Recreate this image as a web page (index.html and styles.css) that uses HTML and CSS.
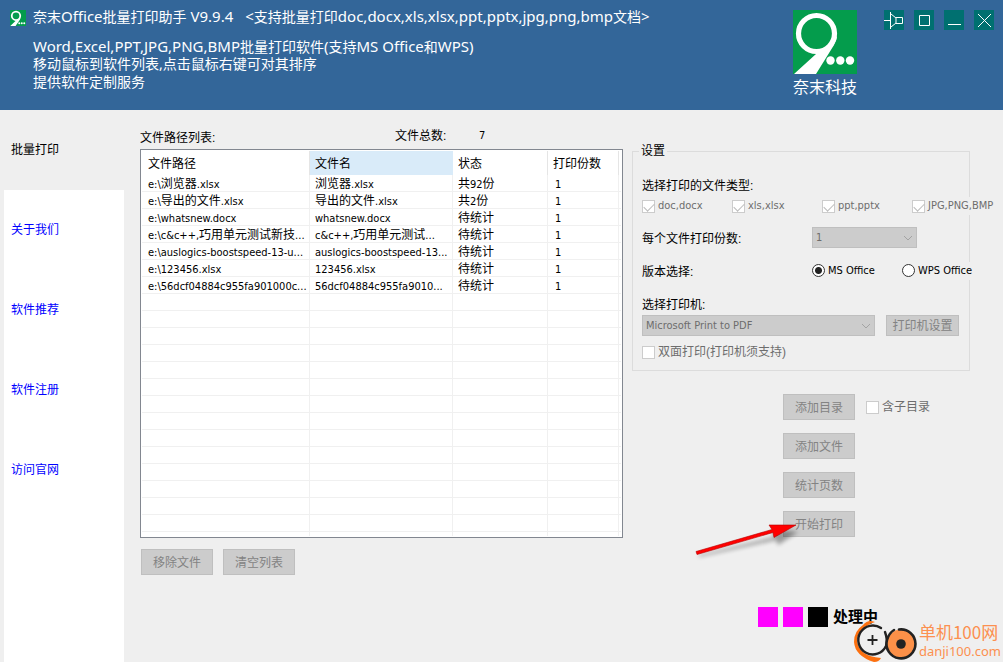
FILE: index.html
```html
<!DOCTYPE html>
<html lang="zh-CN">
<head>
<meta charset="utf-8">
<title>奈末Office批量打印助手</title>
<link rel="stylesheet" href="styles.css">
</head>
<body>
<header class="header">
  <svg class="app-icon" viewBox="0 0 64 64" aria-hidden="true">
    <rect width="64" height="64" fill="#049c4c"/>
    <path d="M1 64 22 44Q18 43 24 42Q36 41 42 31L40 38 36 44L22 64Z" fill="#fff"/>
    <circle cx="24" cy="23" r="17" fill="#049c4c" stroke="#fff" stroke-width="7"/>
    <g fill="#fff"><circle cx="37" cy="53" r="4"/><circle cx="47" cy="53" r="4"/><circle cx="57" cy="53" r="4"/></g>
  </svg>
  <div class="headings">
    <h1 class="title"><span><span class="zh">奈末</span>Office<span class="zh">批量打印助手</span> V9.9.4</span><span>&lt;<span class="zh">支持批量打印</span>doc,docx,xls,xlsx,ppt,pptx,jpg,png,bmp<span class="zh">文档</span>&gt;</span></h1>
    <p class="intro">Word,Excel,PPT,JPG,PNG,BMP<span class="zh">批量打印软件</span>(<span class="zh">支持</span>MS Office<span class="zh">和</span>WPS)</p>
    <p class="intro zh">移动鼠标到软件列表,点击鼠标右键可对其排序</p>
    <p class="intro zh">提供软件定制服务</p>
  </div>
  <div class="brand">
    <svg class="brand-logo" viewBox="0 0 64 64" aria-hidden="true">
      <rect width="64" height="64" fill="#049c4c"/>
      <path d="M1 64 23 44V40L36 36 44 26Q44 30 41 35L23 64Z" fill="#fff"/>
      <circle cx="23.500" cy="23.500" r="18" fill="#049c4c" stroke="#fff" stroke-width="5.200"/>
      <g fill="#fff"><circle cx="37.500" cy="50.500" r="4.200"/><circle cx="47.300" cy="50.500" r="4.200"/><circle cx="57" cy="50.500" r="4.200"/></g>
    </svg>
    <span>奈末科技</span>
  </div>
  <div class="window-buttons">
    <button type="button" aria-label="置顶"><svg viewBox="0 0 20 20"><path d="M0 10.500H6M6.500 2V19M7 4l5 4v5l-5 4M12 7.500h6.500v6H12"/></svg></button>
    <button type="button" aria-label="最大化"><svg viewBox="0 0 20 20"><path d="M5.500 5.500h10v10h-10z"/></svg></button>
    <button type="button" aria-label="最小化"><svg viewBox="0 0 20 20"><path d="M4 14.500h13"/></svg></button>
    <button type="button" aria-label="关闭"><svg viewBox="0 0 20 20"><path d="M4 4l13 13M17 4 4 17"/></svg></button>
  </div>
</header>
<div class="body">
  <nav class="sidebar">
    <a class="active" href="#">批量打印</a>
    <a href="#">关于我们</a>
    <a href="#">软件推荐</a>
    <a href="#">软件注册</a>
    <a href="#">访问官网</a>
  </nav>
  <main class="main">
    <section class="files">
      <div class="files-caption">
        <span class="caption-list">文件路径列表:</span>
        <span class="caption-total">文件总数:</span>
        <span class="en">7</span>
      </div>
      <div class="list-box">
        <table class="file-table">
          <colgroup><col><col class="c-name"><col class="c-state"><col class="c-copies"><col class="c-rest"></colgroup>
          <thead><tr><th>文件路径</th><th class="sorted">文件名</th><th>状态</th><th>打印份数</th><th></th></tr></thead>
          <tbody>
            <tr><td><span class="en">e:\</span>浏览器<span class="en">.xlsx</span></td><td>浏览器<span class="en">.xlsx</span></td><td>共<span class="en">92</span>份</td><td><span class="en">1</span></td><td></td></tr>
            <tr><td><span class="en">e:\</span>导出的文件<span class="en">.xlsx</span></td><td>导出的文件<span class="en">.xlsx</span></td><td>共<span class="en">2</span>份</td><td><span class="en">1</span></td><td></td></tr>
            <tr><td><span class="en">e:\whatsnew.docx</span></td><td><span class="en">whatsnew.docx</span></td><td>待统计</td><td><span class="en">1</span></td><td></td></tr>
            <tr><td><span class="en">e:\c&amp;c++,</span>巧用单元测试新技<span class="en">...</span></td><td><span class="en">c&amp;c++,</span>巧用单元测试<span class="en">...</span></td><td>待统计</td><td><span class="en">1</span></td><td></td></tr>
            <tr><td><span class="en">e:\auslogics-boostspeed-13-u...</span></td><td><span class="en">auslogics-boostspeed-13...</span></td><td>待统计</td><td><span class="en">1</span></td><td></td></tr>
            <tr><td><span class="en">e:\123456.xlsx</span></td><td><span class="en">123456.xlsx</span></td><td>待统计</td><td><span class="en">1</span></td><td></td></tr>
            <tr><td><span class="en">e:\56dcf04884c955fa901000c...</span></td><td><span class="en">56dcf04884c955fa9010...</span></td><td>待统计</td><td><span class="en">1</span></td><td></td></tr>
            <tr><td></td><td></td><td></td><td></td><td></td></tr>
            <tr><td></td><td></td><td></td><td></td><td></td></tr>
            <tr><td></td><td></td><td></td><td></td><td></td></tr>
            <tr><td></td><td></td><td></td><td></td><td></td></tr>
            <tr><td></td><td></td><td></td><td></td><td></td></tr>
            <tr><td></td><td></td><td></td><td></td><td></td></tr>
            <tr><td></td><td></td><td></td><td></td><td></td></tr>
            <tr><td></td><td></td><td></td><td></td><td></td></tr>
            <tr><td></td><td></td><td></td><td></td><td></td></tr>
            <tr><td></td><td></td><td></td><td></td><td></td></tr>
            <tr><td></td><td></td><td></td><td></td><td></td></tr>
            <tr><td></td><td></td><td></td><td></td><td></td></tr>
            <tr><td></td><td></td><td></td><td></td><td></td></tr>
            <tr><td></td><td></td><td></td><td></td><td></td></tr>
            <tr class="tail"><td></td><td></td><td></td><td></td><td></td></tr>
          </tbody>
        </table>
      </div>
      <div class="list-actions">
        <button class="btn" type="button" disabled>移除文件</button>
        <button class="btn" type="button" disabled>清空列表</button>
      </div>
    </section>
    <section class="side">
      <fieldset class="settings">
        <legend>设置</legend>
        <div class="row">选择打印的文件类型:</div>
        <div class="row types">
          <label class="check en"><input type="checkbox" checked disabled>doc,docx</label>
          <label class="check en"><input type="checkbox" checked disabled>xls,xlsx</label>
          <label class="check en"><input type="checkbox" checked disabled>ppt,pptx</label>
          <label class="check en"><input type="checkbox" checked disabled>JPG,PNG,BMP</label>
        </div>
        <div class="row copies">
          <label class="row-label" for="copies">每个文件打印份数:</label>
          <div class="select copies-select">
            <select id="copies" disabled><option>1</option></select>
            <svg viewBox="0 0 10 6" aria-hidden="true"><path d="M1 1l4 4 4-4"/></svg>
          </div>
        </div>
        <div class="row version">
          <span class="row-label">版本选择:</span>
          <label class="check radio en"><input type="radio" name="version" checked>MS Office</label>
          <label class="check radio en"><input type="radio" name="version">WPS Office</label>
        </div>
        <label class="row printer" for="printer">选择打印机:</label>
        <div class="row printer-row">
          <div class="select">
            <select id="printer" disabled><option>Microsoft Print to PDF</option></select>
            <svg viewBox="0 0 10 6" aria-hidden="true"><path d="M1 1l4 4 4-4"/></svg>
          </div>
          <button class="btn small" type="button" disabled>打印机设置</button>
        </div>
        <label class="check duplex"><input type="checkbox" disabled>双面打印(打印机须支持)</label>
      </fieldset>
      <div class="actions">
        <button class="btn" type="button" disabled>添加目录</button>
        <label class="check"><input type="checkbox" disabled>含子目录</label>
        <button class="btn" type="button" disabled>添加文件</button>
        <button class="btn" type="button" disabled>统计页数</button>
        <div class="start">
          <button class="btn" type="button" disabled>开始打印</button>
          <svg class="arrow" viewBox="0 0 112 44" aria-hidden="true">
            <path class="arrow-shadow" d="M7 35 82 17 80 9 106 12 86 25 84 20 7 37Z"/>
            <path d="M4 31.500 80 9.500 77 5 104 5 82 17.500 81 12.500 5 34.500Z" fill="#f00" stroke="#b40000" stroke-width=".6"/>
          </svg>
        </div>
      </div>
      <div class="status">
        <i></i><i></i><i class="off"></i>
        <strong>处理中</strong>
      </div>
    </section>
  </main>
</div>
<div class="watermark">
  <svg viewBox="0 0 64 42" aria-hidden="true">
    <path d="M21 2Q14-1 9 5Q0 11 0 22Q1 36 20 42Q25 42 27 38Q4 36 3 20Q4 8 21 2Z" fill="#fc7010"/>
    <path d="M27 8A14.500 14.500 0 1 0 32 26Q34 20 31 12" fill="none" stroke="#222" stroke-width="2.400" stroke-linecap="round"/>
    <path d="M18.500 15v10M13.500 20h10" stroke="#222" stroke-width="1.800"/>
    <circle cx="47" cy="24" r="14.500" fill="#fc9048"/>
    <path d="M45 9.500A14.500 14.500 0 1 1 33 20Q35 13 40 10" fill="none" stroke="#222" stroke-width="2.600" stroke-linecap="round"/>
    <circle cx="47" cy="24" r="4.800" fill="#222"/>
  </svg>
  <div class="watermark-text"><b>单机100网</b><span>danji100.com</span></div>
</div>
</body>
</html>
```
FILE: styles.css
```css
* { box-sizing: border-box; }
body {
  margin: 0;
  min-height: 100vh;
  display: flex;
  flex-direction: column;
  position: relative;
  background: #efefef;
  color: #000;
  font: 12px/18px "Liberation Sans", "Noto Sans CJK SC", sans-serif;
}
button, select, input { font: inherit; margin: 0; }
.en { font-family: "DejaVu Sans Condensed", "Noto Sans", sans-serif; font-size: 11px; }

.header {
  display: flex;
  align-items: flex-start;
  min-height: 110px;
  padding: 7px 9px 8px 10px;
  background: #336699;
  color: #fff;
}
.app-icon { width: 16px; height: 16px; margin: 3px 7px 0 0; flex: none; }
.headings { flex: 1; white-space: nowrap; font-family: "Noto Sans", "Noto Sans CJK SC", sans-serif; }
.title { display: flex; gap: 12px; margin: 0 0 11px; font-size: 15px; font-weight: 400; line-height: 18px; }
.intro { height: 18px; margin: 0; font-size: 15px; line-height: 18px; }
.zh, .intro.zh { font-size: 14px; }
.brand {
  width: 66px;
  margin: 3px 26px 0 0;
  text-align: center;
  font: 16px/24px "Noto Sans CJK SC", sans-serif;
  white-space: nowrap;
}
.brand-logo { display: block; width: 64px; height: 64px; margin: 0 auto; }
.window-buttons { display: flex; gap: 10px; margin-top: 3px; }
.window-buttons button { width: 20px; height: 20px; padding: 0; border: 0; background: #007070; }
.window-buttons svg { display: block; fill: none; stroke: #fff; }

.body { flex: 1; display: flex; }
.sidebar { display: flex; flex-direction: column; width: 120px; margin-left: 4px; background: #fff; flex: none; }
.sidebar a { display: flex; align-items: center; height: 80px; padding-left: 7px; color: #00f; text-decoration: none; }
.sidebar .active { background: #efefef; color: #000; }

.main { flex: 1; display: flex; gap: 9px; padding: 16px 33px 16px 16px; min-width: 0; }
.files { flex: 1; min-width: 0; }
.files-caption { display: flex; height: 23px; padding-top: 1px; }
.caption-list { width: 255px; padding-top: 2px; }
.caption-total { width: 84px; }
.list-box { padding: 1px; border: 1px solid #828790; background: #fff; }
.file-table { width: 100%; table-layout: fixed; border-collapse: separate; border-spacing: 0; }
.c-name { width: 143px; }
.c-state { width: 95px; }
.c-copies { width: 71px; }
.c-rest { width: 2px; }
.file-table th { height: 24px; padding: 2px 5px 0; border-right: 1px solid #e5e5e5; text-align: left; font-weight: 400; white-space: nowrap; }
.file-table th:first-child { padding-left: 6px; }
.file-table th:last-child { padding: 0; border: 0; }
.file-table .sorted { background: #d9ebf9; border-color: #d9ebf9; }
.file-table td { height: 17px; padding: 2px 5px 0; border: solid #f0f0f0; border-width: 0 1px 1px 0; line-height: 12px; white-space: nowrap; }
.file-table td:first-child { padding-left: 6px; }
.file-table td:nth-child(4) { padding-left: 7px; }
.file-table td:last-child { padding: 0; border-right: 0; }
.file-table .tail td { height: 4px; border-bottom: 0; }
.list-actions { display: flex; gap: 10px; padding: 11px 1px; }

.btn { width: 72px; height: 26px; padding: 2px 0 0; border: 1px solid #bfbfbf; background: #ccc; color: #838383; white-space: nowrap; }
.btn.small { width: 73px; height: 21px; padding: 0; line-height: 18px; }

.side { width: 338px; flex: none; padding-top: 17px; }
.settings { margin: 0; padding: 18px 9px 9px; border: 1px solid #dcdcdc; min-width: 0; }
.settings legend { height: 16px; padding: 0 2px; margin-left: -3px; line-height: 16px; }
.row { display: flex; align-items: center; white-space: nowrap; }
.row-label { width: 170px; padding-top: 3px; flex: none; }
.check { display: flex; align-items: center; gap: 3px; height: 18px; color: #6d6d6d; white-space: nowrap; }
.types { margin-top: 2px; }
.types .check { width: 90px; flex: none; }
.types .check:last-child { width: max-content; background: #efefef; }
.check input {
  appearance: none;
  width: 13px;
  height: 13px;
  flex: none;
  border: 1px solid #ccc;
  background: #fff;
}
.check input[type="checkbox"]:checked::before {
  content: "";
  display: block;
  width: 9px;
  height: 5px;
  margin: 2px 1px;
  border: solid #bcbcbc;
  border-width: 0 0 1px 1px;
  transform: rotate(-45deg);
}
.check.radio { width: 90px; flex: none; color: #000; }
.check.radio:last-child { width: max-content; background: #efefef; }
.radio input { border-color: #333; border-radius: 50%; }
.radio input:checked { background: radial-gradient(circle, #222 0 3px, #fff 4px); }
.copies { margin-top: 12px; }
.select { position: relative; flex: 1; }
.select select {
  display: block;
  appearance: none;
  width: 100%;
  height: 21px;
  padding: 0 3px;
  border: 1px solid #bfbfbf;
  border-radius: 0;
  background: #ccc;
  color: #6d6d6d;
  opacity: 1;
  font: 11px/18px "DejaVu Sans Condensed", "Noto Sans", sans-serif;
}
.select svg { position: absolute; right: 4px; top: 8px; width: 10px; height: 6px; fill: none; stroke: #a3a3a3; pointer-events: none; }
.copies-select { flex: none; width: 105px; }
.version { margin-top: 12px; }
.printer { margin-top: 15px; }
.printer-row { gap: 11px; margin-top: 1px; padding-right: 1px; }
.duplex { margin-top: 7px; }

.actions { display: grid; grid-template-columns: 72px 1fr; gap: 13px 11px; margin: 23px 0 0 151px; align-items: center; }
.actions .btn { grid-column: 1; }
.start { position: relative; grid-column: 1; }
.start .btn { display: block; }
.arrow { position: absolute; left: -91px; top: 9px; width: 112px; height: 44px; pointer-events: none; }
.arrow-shadow { fill: #000; opacity: .35; filter: blur(2px); }

.status { display: flex; align-items: center; gap: 5px; margin: 70px 0 0 126px; }
.status i { width: 20px; height: 20px; background: #f0f; }
.status .off { background: #000; }
.status strong { font-size: 15px; line-height: 20px; }

.watermark { position: absolute; right: 2px; bottom: 0; display: flex; align-items: center; gap: 1px; color: #fc9050; }
.watermark svg { width: 64px; height: 42px; }
.watermark-text { display: flex; flex-direction: column; font: 17px/20px "Noto Sans CJK SC", sans-serif; white-space: nowrap; }
.watermark-text b { font-weight: 400; }
.watermark-text span { font: 13px/18px "Noto Sans", sans-serif; }
```
